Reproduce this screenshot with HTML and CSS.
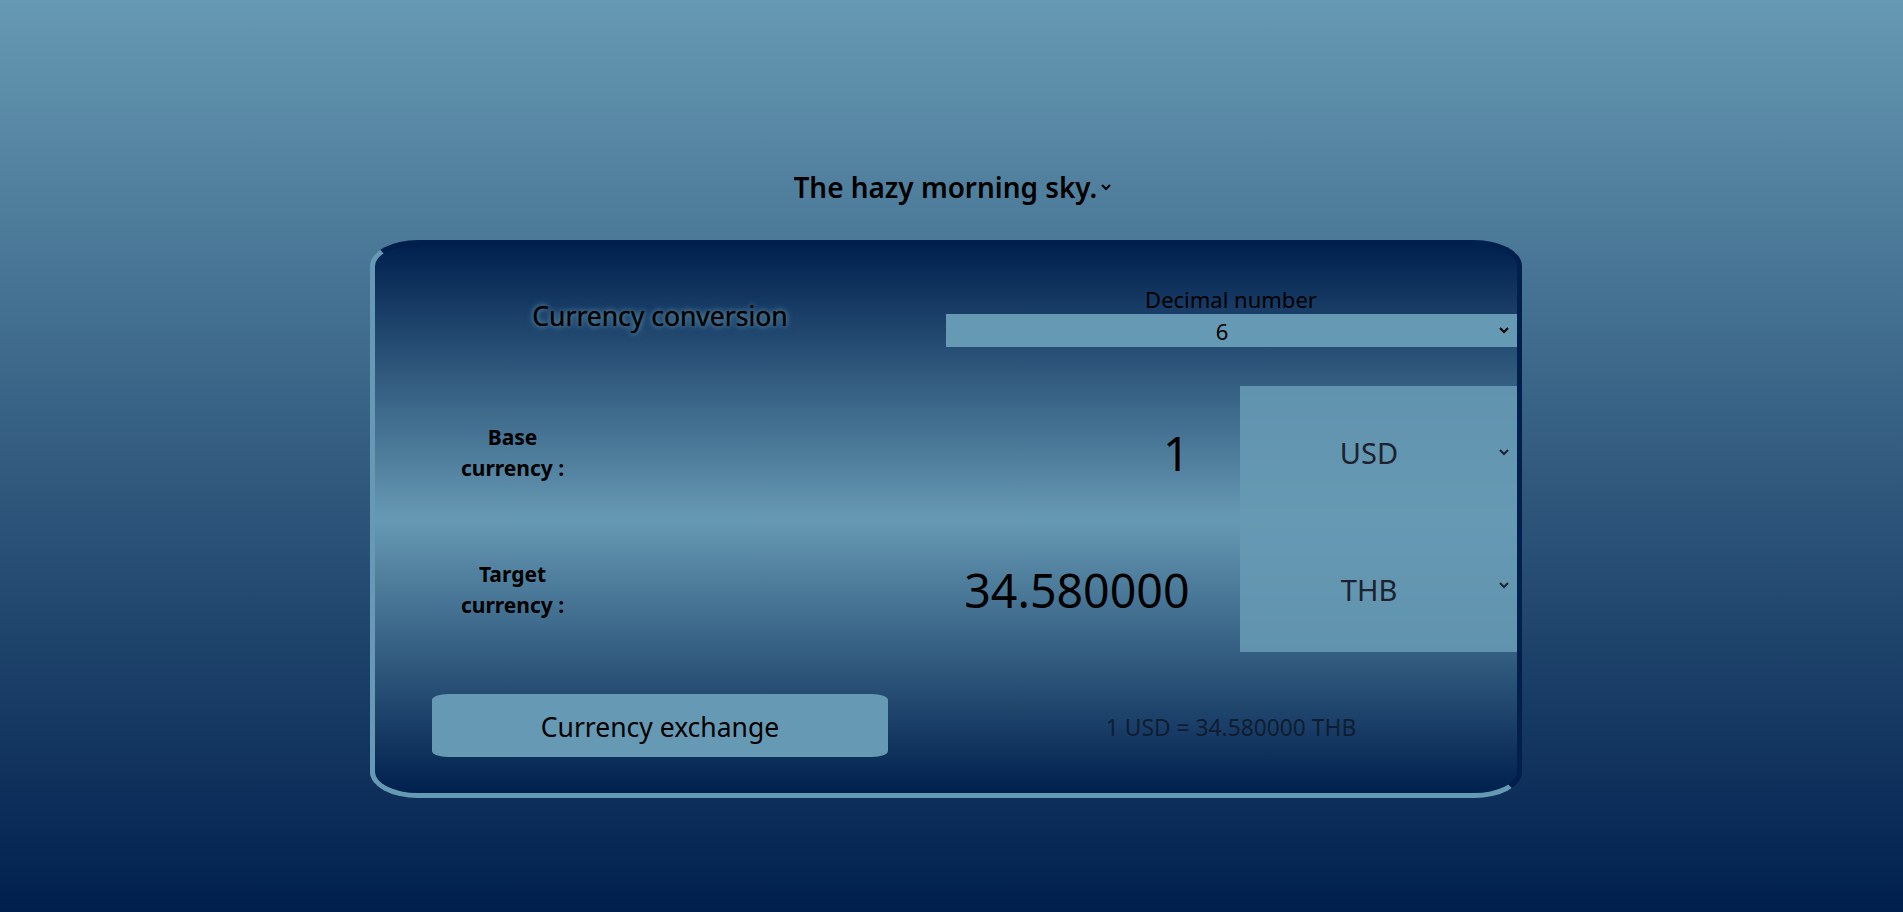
FILE: index.html
```html
<!DOCTYPE html>
<html lang="en">
<head>
<meta charset="utf-8">
<title>Currency conversion</title>
<link rel="stylesheet" href="styles.css">
</head>
<body>
<main class="page">
  <div class="theme-row">
    <select class="theme-select" aria-label="Theme">
      <option>The hazy morning sky.</option>
    </select>
  </div>
  <div class="card-row">
    <section class="card">
      <div class="title-cell">
        <h1 class="title">Currency conversion</h1>
      </div>
      <div class="decimal-cell">
        <label class="decimal-label" for="decimal">Decimal number</label>
        <select id="decimal" class="decimal-select">
          <option>0</option>
          <option>1</option>
          <option>2</option>
          <option>3</option>
          <option>4</option>
          <option>5</option>
          <option selected>6</option>
        </select>
      </div>
      <div class="converter">
        <div class="cur-label"><span>Base currency :</span></div>
        <input class="amount" type="text" value="1" aria-label="Base amount">
        <select class="cur-select" aria-label="Base currency">
          <option selected>USD</option>
          <option>THB</option>
          <option>EUR</option>
        </select>
        <div class="cur-label lower"><span>Target currency :</span></div>
        <input class="amount lower" type="text" value="34.580000" aria-label="Target amount" readonly>
        <select class="cur-select lower" aria-label="Target currency">
          <option>USD</option>
          <option selected>THB</option>
          <option>EUR</option>
        </select>
      </div>
      <div class="button-cell">
        <button class="exchange-btn" type="button">Currency exchange</button>
      </div>
      <div class="rate-cell">
        <p class="rate">1 USD = 34.580000 THB</p>
      </div>
    </section>
  </div>
</main>
</body>
</html>
```
FILE: styles.css
```css
html {
  height: 100%;
}

body {
  margin: 0;
  min-height: 100%;
  background: linear-gradient(to bottom, #6699b3 0%, #001f4d 100%);
  font-family: "Noto Sans", sans-serif;
  color: #000;
}

.page {
  padding-top: 166px;
}

.theme-row {
  display: flex;
  justify-content: center;
}

.theme-select {
  font-family: "Noto Sans", sans-serif;
  font-size: 27.9px;
  font-weight: 600;
  color: #000;
  background: transparent;
  border: none;
  height: 42px;
  outline: none;
}

.card-row {
  display: flex;
  justify-content: center;
  padding-right: 12px;
  margin-top: 32px;
}

.card {
  width: 1142px;
  height: 548px;
  border: 5px solid;
  border-color: #001f4d #001f4d #6699b3 #6699b3;
  border-radius: 48px / 26px;
  background: linear-gradient(to bottom, #00204e 0%, #6699b3 50%, #00204e 100%);
  display: grid;
  grid-template-columns: 1fr 1fr;
  grid-template-rows: 141px 266px 1fr;
}

.title-cell {
  display: flex;
  align-items: center;
  justify-content: center;
}

.title {
  margin: 0;
  font-size: 26.5px;
  font-weight: 400;
  text-shadow: 0 0 1px rgba(0, 0, 0, 0.7), 0 0 5px #6699b3, 0 0 9px rgba(102, 153, 179, 0.6);
}

.decimal-cell {
  display: flex;
  flex-direction: column;
  justify-content: center;
}

.decimal-label {
  font-size: 22px;
  line-height: 30px;
  text-align: center;
}

.decimal-select {
  height: 33px;
  padding-right: 1px;
  border: none;
  border-right: 5px solid transparent;
  background: #6699b3;
  font-family: "Noto Sans", sans-serif;
  font-size: 22px;
  color: #000;
  text-align: center;
  text-align-last: center;
  outline: none;
}

.converter {
  grid-column: 1 / -1;
  display: grid;
  grid-template-columns: 276px 1fr 277px;
  grid-template-rows: 133px 133px;
}

.cur-label {
  display: flex;
  align-items: center;
  justify-content: center;
}

.cur-label span {
  width: 120px;
  text-align: center;
  font-size: 21px;
  font-weight: 700;
  line-height: 31px;
}

.amount {
  box-sizing: border-box;
  width: 100%;
  height: 100%;
  padding: 0 50px 0 0;
  border: none;
  background: transparent;
  font-family: "Noto Sans", sans-serif;
  font-size: 46.5px;
  color: #000;
  text-align: right;
  outline: none;
}

.cur-select {
  height: 133px;
  padding-right: 1px;
  border: none;
  border-right: 5px solid transparent;
  background: rgba(102, 153, 179, 0.9);
  font-family: "Noto Sans", sans-serif;
  font-size: 29px;
  color: #1c2230;
  text-align: center;
  text-align-last: center;
  outline: none;
}

.cur-label.lower {
  padding-top: 8px;
}

.amount.lower {
  padding-top: 8px;
}

.cur-select.lower {
  padding-top: 8px;
}

.button-cell {
  display: flex;
  align-items: center;
  justify-content: center;
}

.exchange-btn {
  width: 456px;
  height: 63px;
  padding-top: 4px;
  border: none;
  border-radius: 16px / 6px;
  background: #6699b3;
  font-family: "Noto Sans", sans-serif;
  font-size: 26.5px;
  color: #000;
  margin-top: 5px;
}

.rate-cell {
  display: flex;
  align-items: center;
  justify-content: center;
}

.rate {
  margin: 10px 0 0;
  font-size: 22.8px;
  color: #101d31;
}
```
